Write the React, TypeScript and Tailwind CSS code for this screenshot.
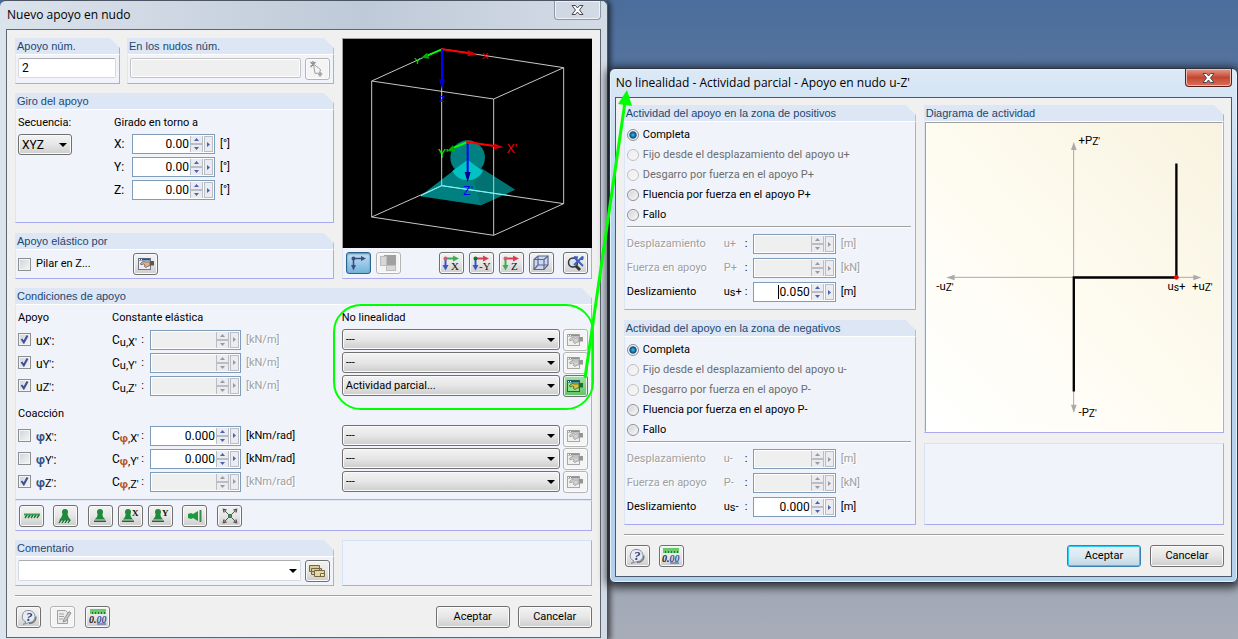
import { ReactNode, useState } from 'react';

const BUTTON =
  'flex items-center justify-center rounded-[3px] border border-[#707070] bg-linear-to-b from-[#f3f3f3] from-0% via-[#e6e6e6] via-50% to-[#cdcdcd] shadow-[inset_0_0_0_1px_#fafafa]';

function Group({ title, children, className = '' }: { title: string; children: ReactNode; className?: string }) {
  return (
    <section className={`flex min-w-0 flex-col ${className}`}>
      <h2 className="h-4 border-r border-[#a9a9ee] bg-[#dce6f5] pl-[2px] font-['Liberation_Sans',sans-serif] text-[11px] leading-4 whitespace-nowrap text-[#1c4670] [clip-path:polygon(0_0,calc(100%_-_10px)_0,100%_10px,100%_100%,0_100%)]">
        {title}
      </h2>
      <div className="flex-1 border border-t-white border-r-[#a9a9ee] border-b-[#a9a9ee] border-l-[#dce6f5] bg-[#f0f4fa]">
        {children}
      </div>
    </section>
  );
}

function EmptyPanel({ className = '' }: { className?: string }) {
  return (
    <div className={`border border-[#d5e3f7] border-r-[#a9a9ee] border-b-[#a9a9ee] bg-[#f0f4fa] ${className}`} />
  );
}

function Divider() {
  return <div className="h-[2px] shrink-0 border-t border-[#a0a0a0] bg-white" />;
}

type ToolState = 'normal' | 'disabled' | 'pressed' | 'green';

function ToolButton({
  label,
  state = 'normal',
  className = '',
  children,
}: {
  label: string;
  state?: ToolState;
  className?: string;
  children: ReactNode;
}) {
  const styles = {
    normal: BUTTON,
    disabled:
      'flex items-center justify-center rounded-[3px] border border-[#b4b4b4] bg-[#f4f4f4] shadow-[inset_0_0_0_1px_#fcfcfc] grayscale [&>svg]:opacity-60',
    pressed:
      'flex items-center justify-center rounded-[3px] border border-[#2c628b] bg-linear-to-b from-[#c4e0f1] to-[#72b3db] shadow-[inset_0_1px_2px_#4d87ad]',
    green:
      'flex items-center justify-center rounded-[3px] border border-[#707070] bg-linear-to-b from-[#a5e0a5] to-[#5fc267] shadow-[inset_0_0_0_1px_#e4f5e4]',
  };
  return (
    <button
      type="button"
      aria-label={label}
      disabled={state === 'disabled'}
      className={`h-[22px] w-[25px] shrink-0 ${styles[state]} ${className}`}
    >
      {children}
    </button>
  );
}

function TextButton({ children, primary = false }: { children: ReactNode; primary?: boolean }) {
  return (
    <button
      type="button"
      className={
        primary
          ? 'h-[22px] w-[74px] rounded-[3px] border border-[#3c7fb1] bg-linear-to-b from-[#e8f1f6] via-[#dbe9f1] via-50% to-[#bfd6e3] shadow-[inset_0_0_0_1px_#2fcdf6]'
          : `h-[22px] w-[74px] ${BUTTON}`
      }
    >
      {children}
    </button>
  );
}

function Spinner({
  label,
  value = '',
  disabled = false,
  wide = false,
  caret = false,
}: {
  label: string;
  value?: string;
  disabled?: boolean;
  wide?: boolean;
  caret?: boolean;
}) {
  const [text, setText] = useState(value);
  const arrow = disabled ? '#9a9a9a' : '#4a62b4';
  const key = 'flex items-center justify-center border border-[#b9bdc6] bg-[#ececf0]';
  return (
    <div
      className={`flex h-5 shrink-0 items-center border border-[#7f9db9] p-px ${wide ? 'w-[91px]' : 'w-[83px]'} ${
        disabled ? 'bg-[#efefef] ring-1 ring-white ring-inset' : 'bg-white'
      }`}
    >
      <div className="flex min-w-0 flex-1 items-center justify-end">
        {caret && <span className="h-[14px] w-px bg-black" />}
        <input
          aria-label={label}
          value={text}
          disabled={disabled}
          onChange={(e) => setText(e.target.value)}
          className={`min-w-0 bg-transparent pr-px text-right text-[12px] outline-none ${caret ? 'w-8' : 'w-full'}`}
        />
      </div>
      <div className="flex h-4 w-[13px] flex-col">
        <button type="button" aria-label="+" disabled={disabled} className={`h-2 border-t-0 ${key}`}>
          <svg viewBox="0 0 5 3" className="h-[3px] w-[5px]">
            <path d="M0 3L2.500 0L5 3z" fill={arrow} />
          </svg>
        </button>
        <button type="button" aria-label="-" disabled={disabled} className={`h-2 border-b-0 ${key}`}>
          <svg viewBox="0 0 5 3" className="h-[3px] w-[5px]">
            <path d="M0 0L2.500 3L5 0z" fill={arrow} />
          </svg>
        </button>
      </div>
      <button type="button" aria-label="Más" disabled={disabled} className={`ml-px h-4 w-[9px] ${key}`}>
        <svg viewBox="0 0 3 5" className="h-[5px] w-[3px]">
          <path d="M0 0L3 2.500L0 5z" fill={arrow} />
        </svg>
      </button>
    </div>
  );
}

function Unit({ children, muted = false }: { children: ReactNode; muted?: boolean }) {
  return <span className={`ml-[5px] ${muted ? 'text-[#a0a0a0] [text-shadow:1px_1px_white]' : ''}`}>{children}</span>;
}

function DropDown({ label, options, className = '' }: { label: string; options: string[]; className?: string }) {
  return (
    <div className={`relative ${className}`}>
      <select
        aria-label={label}
        className={`block h-[21px] w-full appearance-none pr-4 pl-[3px] outline-none ${BUTTON}`}
      >
        {options.map((option) => (
          <option key={option}>{option}</option>
        ))}
      </select>
      <svg viewBox="0 0 8 4" className="pointer-events-none absolute top-[9px] right-[5px] h-1 w-2">
        <path d="M0 0H8L4 4z" />
      </svg>
    </div>
  );
}

function CheckBox({ checked = false, children }: { checked?: boolean; children: ReactNode }) {
  return (
    <label className="flex items-center gap-[5px]">
      <span className="grid size-[13px] shrink-0">
        <input
          type="checkbox"
          defaultChecked={checked}
          className="peer col-start-1 row-start-1 size-[13px] appearance-none border border-[#8e8f8f] bg-linear-to-br from-[#cfd3da] to-[#f6f6f6] shadow-[inset_0_0_0_1px_#f4f4f4]"
        />
        <svg
          viewBox="0 0 13 13"
          className="pointer-events-none invisible col-start-1 row-start-1 peer-checked:visible"
          fill="none"
          stroke="#3a4f97"
          strokeWidth="2"
        >
          <path d="M3.500 6L5.800 9.300L9.500 2.500" />
        </svg>
      </span>
      {children}
    </label>
  );
}

/* Icons */

function WindowHandIcon({ tone = 'normal' }: { tone?: 'normal' | 'green' }) {
  const green = tone === 'green';
  return (
    <svg viewBox="0 0 18 16" className="h-4 w-[18px]">
      <rect x="1.500" y="2.500" width="12" height="11" fill={green ? '#8fe08f' : '#eceef2'} stroke={green ? '#1c6f2c' : '#6d7789'} />
      <path d="M2 3.500H13" stroke={green ? '#1d4f9a' : '#34528a'} strokeWidth="2" />
      <path d="M2 3.500H3M4 3.500H5" stroke="#fff" />
      <path
        d="M3.500 7.500L6 5.500L9 6L13 5.800V9.500L10.500 10.500L9 11.500L7.500 10.500L8 9L6.500 8L4 8.800z"
        fill={green ? '#d8c040' : '#d9b394'}
        stroke={green ? '#3d5a1c' : '#6e5646'}
        strokeWidth=".8"
      />
      <path d="M13 5H17V9.500L13 9.500z" fill={green ? '#187037' : '#5d574e'} />
    </svg>
  );
}

function PickIcon() {
  return (
    <svg viewBox="0 0 16 16" className="size-4">
      <path d="M1.500 1L6.500 6M6.500 1L1.500 6M4 0V5" stroke="#444" strokeWidth="1.200" />
      <path d="M4.500 3L11.500 8.500L11 10.500L13 13L11 15.500L8.500 12L6 12.500z" fill="#f4f4f4" stroke="#666" />
      <path d="M10.500 10.500L13 13L11 15.500L9 12.500z" fill="#777" />
    </svg>
  );
}

function AxisIcon({ name, h, v }: { name: string; h: string; v: string }) {
  return (
    <svg viewBox="0 0 19 16" className="h-4 w-[19px]">
      <path d="M3 3.500H12" stroke={h} strokeWidth="2" />
      <path d="M11 0.500L17 3.500L11 6.500z" fill={h} />
      <path d="M3.500 3V11" stroke={v} strokeWidth="2" />
      <path d="M.5 10H6.500L3.500 15.500z" fill={v} />
      <circle cx="3.500" cy="3.500" r="2" fill={name === '-Y' ? '#12702c' : '#d35d68'} />
      <text x={name === '-Y' ? 7 : 9} y="14.500" fontSize="11" fontFamily="Liberation Serif, serif" fill="#111">
        {name}
      </text>
    </svg>
  );
}

function AxesIcon() {
  return (
    <svg viewBox="0 0 18 16" className="h-4 w-[18px]" fill="#3d4d84">
      <path d="M4 3.500H13M4.500 3V11" stroke="#3d4d84" strokeWidth="1.500" />
      <path d="M12 1L17 3.500L12 6zM2 10H7L4.500 15.500z" />
      <circle cx="4.500" cy="3.500" r="2" />
    </svg>
  );
}

function SquaresIcon() {
  return (
    <svg viewBox="0 0 18 16" className="h-4 w-[18px]">
      <rect x="5" y="0" width="12" height="11" fill="#6a6a6a" />
      <rect x="1.500" y="1.500" width="6" height="9" fill="#c4c4c4" stroke="#999" />
      <rect x="7.500" y="10.500" width="9" height="5" fill="#c4c4c4" stroke="#999" />
    </svg>
  );
}

function CubeIcon() {
  return (
    <svg viewBox="0 0 18 16" className="h-4 w-[18px]" fill="#cdd7ef" stroke="#5d678b" strokeWidth="1.200">
      <path d="M2 4.500L6 1H16V10L12 14.500H2z" />
      <path d="M2 4.500H12V14.500M12 4.500L16 1M6 1V10H16M6 10L2 14.500" fill="none" />
    </svg>
  );
}

function ZoomAllIcon() {
  return (
    <svg viewBox="0 0 19 17" className="h-[17px] w-[19px]" fill="none">
      <circle cx="7" cy="7.500" r="4.500" fill="#d7e1f2" stroke="#333" strokeWidth="1.500" />
      <path d="M10 11L14 15" stroke="#333" strokeWidth="3" />
      <path d="M8 2L17 11M17 1.500L8 10M8 2L12 2.500M17 1.500L16 5" stroke="#3f62bb" strokeWidth="2" />
    </svg>
  );
}

function HatchIcon() {
  return (
    <svg viewBox="0 0 18 16" className="h-4 w-[18px]" stroke="#1b7a35">
      <path d="M1 6.500H17" strokeWidth="2" stroke="#3aa04c" />
      <path d="M2 10L4 7M5 10L7 7M8 10L10 7M11 10L13 7M14 10L16 7" strokeWidth="1.500" />
    </svg>
  );
}

function SupportIcon({ base, mark = '' }: { base: 'line' | 'hatch'; mark?: string }) {
  return (
    <svg viewBox="0 0 19 16" className="h-4 w-[19px]" fill="#1d8a3d">
      <circle cx={mark ? 7 : 9} cy="4" r="3" />
      {mark ? (
        <path d="M5 5H9L10 9L12 11.500H2L4 9z" />
      ) : base === 'line' ? (
        <path d="M7 5H11L12 9L14.500 11.500H3.500L6 9z" />
      ) : (
        <path d="M7 5H11L12.500 9L15 12.500H3L5.500 9z" />
      )}
      {base === 'line' ? (
        <path d={mark ? 'M1 12.500H13V14H1z' : 'M3 12.500H15V14H3z'} fill="#2e5e3c" />
      ) : (
        <path d="M3 15L5 12M6 15L8 12M9 15L11 12M12 15L14 12" stroke="#17652c" strokeWidth="1.300" />
      )}
      {mark && (
        <text x="11" y="7.500" fontSize="9" fontWeight="bold" fontFamily="Liberation Serif, serif" fill="#111">
          {mark}
        </text>
      )}
    </svg>
  );
}

function SideSupportIcon() {
  return (
    <svg viewBox="0 0 18 16" className="h-4 w-[18px]" fill="#1d9a3d">
      <path d="M2 6L5 5L7 6L12 3V13L7 10L5 11L2 10z" />
      <path d="M13.500 2H15.500V14H13.500z" fill="#3a8a4c" />
    </svg>
  );
}

function ExpandIcon() {
  return (
    <svg viewBox="0 0 16 16" className="size-4" stroke="#555" fill="none">
      <path d="M3 3L13 13M13 3L3 13" />
      <path d="M2 4.500L1.500 1.500L4.500 2M11.500 2L14.500 1.500L14 4.500M14 11.500L14.500 14.500L11.500 14M4.500 14L1.500 14.500L2 11.500" strokeWidth="1.500" />
      <rect x="6.500" y="6.500" width="3" height="3" fill="#2d9a46" stroke="#3d7a4a" />
    </svg>
  );
}

function NotesIcon() {
  return (
    <svg viewBox="0 0 18 16" className="h-4 w-[18px]" fill="#d9cb98" stroke="#75683f">
      <path d="M1.500 2.500H11.500V8.500H1.500zM3.500 5.500H13.500V11.500H3.500z" />
      <path d="M6.500 7.500H16.500V13.500H6.500z" fill="#e4d8aa" />
      <path d="M12.500 13V10.500H16" fill="#fff" />
    </svg>
  );
}

function HelpIcon() {
  return (
    <svg viewBox="0 0 18 17" className="h-[17px] w-[18px]">
      <path d="M9 1.500A6 6 0 0 1 9 13.500L3 15.500L6 13A6 6 0 0 1 9 1.500z" fill="#e7ebf5" stroke="#8b8f9a" />
      <path d="M9 14.500C13 14.500 16 12 16 7.500" fill="none" stroke="#777" strokeWidth="1.500" />
      <text x="6" y="12" fontSize="13" fontWeight="bold" fontStyle="italic" fontFamily="Liberation Serif, serif" fill="#2d4278">
        ?
      </text>
    </svg>
  );
}

function EditIcon() {
  return (
    <svg viewBox="0 0 18 16" className="h-4 w-[18px]" stroke="#6a6a6a" fill="#e6e6e6">
      <path d="M3.500 1.500H11.500L13.500 3.500V14.500H3.500z" />
      <path d="M5 5H10M5 7.500H10M5 10H9" />
      <path d="M9 13L10 10L15 2.500L17 4L12 12z" fill="#aaa" stroke="#555" />
    </svg>
  );
}

function DecimalsIcon() {
  return (
    <svg viewBox="0 0 18 16" className="h-4 w-[18px]">
      <path d="M1 0H17V5H1z" fill="#69c96c" />
      <path d="M3.500 3V5M6.500 3V5M9.500 3V5M12.500 3V5M15.500 3V5" stroke="#276e31" />
      <text x="0" y="13.500" fontSize="10" fontWeight="bold" fontStyle="italic" fontFamily="Liberation Serif, serif" fill="#222">
        0.<tspan fill="#35509a">00</tspan>
      </text>
      <path d="M8 15H17" stroke="#35509a" />
    </svg>
  );
}

function CloseIcon() {
  return (
    <svg viewBox="0 0 13 10" className="h-[10px] w-[13px]">
      <path d="M1 .5H4.500L6.500 3L8.500 .5H12L8.500 5L12 9.500H8.500L6.500 7L4.500 9.500H1L4.500 5z" fill="#fff" stroke="#45484f" strokeLinejoin="round" />
    </svg>
  );
}

function ModelView() {
  return (
    <svg viewBox="24 116 747 627" className="block h-[209px] w-full bg-black" fontFamily="Liberation Sans, sans-serif">
      <circle cx="398" cy="472" r="52" fill="#008080" />
      <path d="M255 588L398 478L540 568L437 615z" fill="#008080" />
      <path d="M398 478L540 568L437 615z" fill="#007272" />
      <path d="M398 478L352 512A52 52 0 0 0 444 512z" fill="#00c4c4" />
      <g fill="none" stroke="#c8c8c8" strokeWidth="3">
        <path d="M110 242L321 146L686 202L476 296zM110 650L476 705L686 610" />
        <path d="M110 242V650M476 296V705M686 202V610M320 146V556M110 650L320 556L686 610" />
      </g>
      <path d="M258 586L320 556L526 586" fill="none" stroke="#6ff" strokeWidth="3" />
      <g strokeWidth="6">
        <path d="M321 147L402 158" stroke="#f00" />
        <path d="M398 150L428 162L398 168z" fill="#c00" />
        <path d="M321 147L278 165" stroke="#0f0" />
        <path d="M276 157L258 172L284 175z" fill="#0a0" />
        <path d="M321 147V240" stroke="#00f" />
        <path d="M312 237H330L321 267z" fill="#00c" />
        <path d="M398 425L478 437" stroke="#f00" />
        <path d="M476 429L506 441L476 447z" fill="#c00" />
        <path d="M398 425L356 442" stroke="#0f0" />
        <path d="M354 435L336 452L362 454z" fill="#0a0" />
        <path d="M398 425V518" stroke="#00f" />
        <path d="M389 515H407L398 546z" fill="#008" />
      </g>
      <rect x="394" y="421" width="9" height="9" fill="#f00" />
      <g fontSize="29">
        <text x="441" y="177" fill="#f00">X</text>
        <text x="238" y="191" fill="#0f0">Y</text>
        <text x="313" y="304" fill="#00f">Z</text>
      </g>
      <g fontSize="36">
        <text x="515" y="458" fill="#f00">X'</text>
        <text x="309" y="473" fill="#0f0">Y'</text>
        <text x="385" y="584" fill="#00f">Z'</text>
      </g>
    </svg>
  );
}

function ActivityDiagram() {
  return (
    <svg viewBox="31 186 891 924" className="block h-[308px] w-full" fontFamily="Roboto, sans-serif" fontSize="34">
      <path d="M475 1040V262M112 649H840" stroke="#aaa" strokeWidth="3" />
      <path d="M467 266H484L475.500 242zM467 1032H484L475.500 1057zM117 641V658L92 649.500zM835 641V658L859 649.500z" fill="#aaa" />
      <path d="M475.500 992V649.500H784V307" fill="none" stroke="#000" strokeWidth="7" />
      <circle cx="784" cy="649" r="7" fill="#f00" />
      <text x="490" y="249">+P<tspan fontSize="31" dy="3">Z'</tspan></text>
      <text x="490" y="1067">-P<tspan fontSize="31" dy="3">Z'</tspan></text>
      <text x="62" y="686">-u<tspan fontSize="31" dy="3">Z'</tspan></text>
      <text x="757" y="686">u<tspan fontSize="31" dy="3">s</tspan><tspan dy="-3">+</tspan></text>
      <text x="831" y="686">+u<tspan fontSize="31" dy="3">Z'</tspan></text>
    </svg>
  );
}

const ROTATIONS = ['X', 'Y', 'Z'];

const SUPPORTS = [
  { symbol: 'u', axis: "X'", unit: '[kN/m]', checked: true, options: ['---', 'Actividad parcial...'] },
  { symbol: 'u', axis: "Y'", unit: '[kN/m]', checked: true, options: ['---', 'Actividad parcial...'] },
  { symbol: 'u', axis: "Z'", unit: '[kN/m]', checked: true, options: ['Actividad parcial...', '---'] },
];

const RESTRAINTS = [
  { symbol: 'φ', axis: "X'", unit: '[kNm/rad]', checked: false, options: ['---'] },
  { symbol: 'φ', axis: "Y'", unit: '[kNm/rad]', checked: false, options: ['---'] },
  { symbol: 'φ', axis: "Z'", unit: '[kNm/rad]', checked: true, options: ['---'] },
];

function ConditionRow({ symbol, axis, unit, checked, options }: (typeof SUPPORTS)[number]) {
  const partial = options[0] !== '---';
  const greek = symbol === 'φ';
  return (
    <div className="flex h-[23px] items-center">
      <div className="w-[94px] shrink-0">
        <CheckBox checked={checked}>
          <span className="pt-[3px] text-[12px]">
            <span className={greek ? 'font-bold text-[#33558c]' : ''}>{symbol}</span>
            <span className="text-[11px]">{axis}</span>:
          </span>
        </CheckBox>
      </div>
      <div className="flex w-[38px] shrink-0 justify-between pr-[6px]">
        <span className="text-[12px] whitespace-nowrap">
          C
          <sub className="bottom-[-2px] text-[11px]">
            <span className={greek ? 'font-bold text-[#b8581c]' : ''}>{symbol}</span>,{axis}
          </sub>
        </span>
        <span>:</span>
      </div>
      <Spinner label={`C ${symbol},${axis}`} value={checked ? '' : '0.000'} disabled={checked} wide />
      <Unit muted={checked}>{unit}</Unit>
      <div className="ml-auto flex w-[246px] shrink-0 items-center gap-[3px]">
        <DropDown label={`No linealidad ${symbol}${axis}`} options={options} className="w-[218px]" />
        <ToolButton label="Editar" state={partial ? 'green' : 'disabled'}>
          <WindowHandIcon tone={partial ? 'green' : 'normal'} />
        </ToolButton>
      </div>
    </div>
  );
}

function SupportWindow() {
  return (
    <main className="flex min-w-0 flex-[607] flex-col rounded-t-[6px] border-t border-r border-[#4c5563] bg-linear-to-r from-[#dbe3ec] via-[#bfcad8] via-60% to-[#d3dbe6] px-[6px] pb-[2px] shadow-[3px_0_5px_#0008]">
      <div className="flex h-7 items-start justify-between">
        <h1 className="pl-px font-['Open_Sans',sans-serif] text-[12px] leading-7">Nuevo apoyo en nudo</h1>
        <button
          type="button"
          aria-label="Cerrar"
          className="flex h-[19px] w-[47px] items-center justify-center rounded-b-[4px] border border-t-0 border-[#8c98a8] shadow-[inset_0_0_0_1px_#eef2f6]"
        >
          <CloseIcon />
        </button>
      </div>

      <div className="flex flex-col gap-[9px] border border-[#5f6670] bg-[#f0f0f0] p-2 pb-[9px]">
        <div className="flex gap-2">
          <div className="flex min-w-0 flex-1 flex-col gap-[9px]">
            <div className="flex gap-[7px]">
              <Group title="Apoyo núm." className="h-[46px] w-[105px]">
                <input
                  aria-label="Apoyo núm."
                  defaultValue="2"
                  className="mx-[2px] mt-[3px] block h-5 w-[98px] rounded-[2px] border border-[#d6dae0] border-t-[#abadb3] bg-white px-[3px] text-[12px] outline-none"
                />
              </Group>
              <Group title="En los nudos núm." className="h-[46px] flex-1">
                <div className="flex gap-1 pt-[3px] pr-[3px] pl-[2px]">
                  <input
                    aria-label="En los nudos núm."
                    disabled
                    className="h-5 min-w-0 flex-1 rounded-[2px] border border-[#c3c3c3] bg-[#efefef] shadow-[inset_0_0_0_1px_white]"
                  />
                  <ToolButton label="Seleccionar nudos" state="disabled">
                    <PickIcon />
                  </ToolButton>
                </div>
              </Group>
            </div>

            <Group title="Giro del apoyo" className="mb-px h-[130px]">
              <div className="flex pt-1 pl-[2px]">
                <div className="w-24">
                  <p className="mb-[2px] leading-[18px]">Secuencia:</p>
                  <DropDown label="Secuencia" options={['XYZ', 'XZY', 'YXZ']} className="w-[54px] text-[12px]" />
                </div>
                <div>
                  <p className="mb-[2px] leading-[18px]">Girado en torno a</p>
                  <div className="flex flex-col gap-[3px]">
                    {ROTATIONS.map((axis) => (
                      <div key={axis} className="flex items-center">
                        <span className="w-[18px] text-[12px]">{axis}:</span>
                        <Spinner label={axis} value="0.00" />
                        <Unit>[°]</Unit>
                      </div>
                    ))}
                  </div>
                </div>
              </div>
            </Group>

            <Group title="Apoyo elástico por" className="h-[46px]">
              <div className="flex items-center px-[2px] pt-[3px]">
                <div className="w-[115px]">
                  <CheckBox>Pilar en Z...</CheckBox>
                </div>
                <ToolButton label="Editar pilar">
                  <WindowHandIcon />
                </ToolButton>
              </div>
            </Group>
          </div>

          <div className="flex w-[250px] shrink-0 flex-col">
            <div className="border-t border-l border-[#a0a0a0]">
              <ModelView />
            </div>
            <div className="flex flex-1 items-center border-r border-b border-l border-[#a9a9ee] border-l-[#dce6f5] bg-[#f0f4fa] pr-[3px] pl-[3px]">
              <ToolButton label="Ejes" state="pressed">
                <AxesIcon />
              </ToolButton>
              <ToolButton label="Relleno" state="disabled" className="mr-auto ml-[5px]">
                <SquaresIcon />
              </ToolButton>
              <div className="flex gap-[5px]">
                <ToolButton label="Vista X">
                  <AxisIcon name="X" h="#3fae51" v="#3d55c8" />
                </ToolButton>
                <ToolButton label="Vista -Y">
                  <AxisIcon name="-Y" h="#df3c50" v="#3d55c8" />
                </ToolButton>
                <ToolButton label="Vista Z">
                  <AxisIcon name="Z" h="#df3c50" v="#3fae51" />
                </ToolButton>
                <ToolButton label="Isométrica">
                  <CubeIcon />
                </ToolButton>
              </div>
              <ToolButton label="Ver todo" className="ml-[9px]">
                <ZoomAllIcon />
              </ToolButton>
            </div>
          </div>
        </div>

        <div>
          <Group title="Condiciones de apoyo" className="h-[212px]">
            <div className="py-[3px] pr-[3px] pl-[2px]">
              <div className="flex h-5 items-center">
                <span className="w-[94px]">Apoyo</span>
                <span>Constante elástica</span>
                <span className="ml-auto w-[246px]">No linealidad</span>
              </div>
              {SUPPORTS.map((row) => (
                <ConditionRow key={row.axis} {...row} />
              ))}
              <p className="mt-[7px] leading-5">Coacción</p>
              {RESTRAINTS.map((row) => (
                <ConditionRow key={row.axis} {...row} />
              ))}
            </div>
          </Group>
          <div className="flex h-[31px] items-center border border-[#a9a9ee] border-t-[#dce6f5] border-l-[#dce6f5] bg-[#f0f4fa] pl-[3px]">
            <ToolButton label="Empotrado">
              <HatchIcon />
            </ToolButton>
            <ToolButton label="Articulado fijo" className="ml-[9px]">
              <SupportIcon base="hatch" />
            </ToolButton>
            <div className="ml-[10px] flex gap-[5px]">
              <ToolButton label="Deslizante">
                <SupportIcon base="line" />
              </ToolButton>
              <ToolButton label="Deslizante en X">
                <SupportIcon base="line" mark="X" />
              </ToolButton>
              <ToolButton label="Deslizante en Y">
                <SupportIcon base="line" mark="Y" />
              </ToolButton>
            </div>
            <ToolButton label="Lateral" className="ml-[9px]">
              <SideSupportIcon />
            </ToolButton>
            <ToolButton label="Libre" className="ml-[10px]">
              <ExpandIcon />
            </ToolButton>
          </div>
        </div>

        <div className="flex gap-2">
          <Group title="Comentario" className="h-[46px] flex-1">
            <div className="flex gap-1 pt-[3px] pr-[3px] pl-[2px]">
              <div className="relative min-w-0 flex-1">
                <select
                  aria-label="Comentario"
                  className="block h-[21px] w-full appearance-none rounded-[2px] border border-[#d6dae0] border-t-[#abadb3] bg-white outline-none"
                />
                <svg viewBox="0 0 8 4" className="pointer-events-none absolute top-[9px] right-1 h-1 w-2">
                  <path d="M0 0H8L4 4z" />
                </svg>
              </div>
              <ToolButton label="Comentarios guardados">
                <NotesIcon />
              </ToolButton>
            </div>
          </Group>
          <EmptyPanel className="w-[250px] shrink-0" />
        </div>

        <Divider />

        <div className="flex items-center pl-px">
          <ToolButton label="Ayuda">
            <HelpIcon />
          </ToolButton>
          <ToolButton label="Editar comentario" state="disabled" className="ml-[9px]">
            <EditIcon />
          </ToolButton>
          <ToolButton label="Unidades y decimales" className="ml-[10px]">
            <DecimalsIcon />
          </ToolButton>
          <div className="ml-auto flex gap-2">
            <TextButton>Aceptar</TextButton>
            <TextButton>Cancelar</TextButton>
          </div>
        </div>
      </div>
    </main>
  );
}

function ZoneGroup({ title, sign, slip, focused = false }: { title: string; sign: string; slip: string; focused?: boolean }) {
  const modes = [
    { text: 'Completa', disabled: false },
    { text: `Fijo desde el desplazamiento del apoyo u${sign}`, disabled: true },
    { text: `Desgarro por fuerza en el apoyo P${sign}`, disabled: true },
    { text: `Fluencia por fuerza en el apoyo P${sign}`, disabled: false },
    { text: 'Fallo', disabled: false },
  ];
  const rows = [
    { name: 'Desplazamiento', symbol: <>u{sign}</>, unit: '[m]', value: '', disabled: true },
    { name: 'Fuerza en apoyo', symbol: <>P{sign}</>, unit: '[kN]', value: '', disabled: true },
    {
      name: 'Deslizamiento',
      symbol: (
        <>
          u<sub className="bottom-[-1px] text-[11px]">s</sub>
          {sign}
        </>
      ),
      unit: '[m]',
      value: slip,
      disabled: false,
    },
  ];

  return (
    <Group title={title} className="h-[205px]">
      <div className="px-[2px] pt-[3px] pr-1">
        {modes.map((mode, i) => (
          <label key={mode.text} className={`flex h-5 items-center gap-1 ${mode.disabled ? 'text-[#6d6d6d]' : ''}`}>
            <input
              type="radio"
              name={title}
              defaultChecked={i === 0}
              disabled={mode.disabled}
              className="size-3 shrink-0 appearance-none rounded-full border border-[#8e8f8f] bg-linear-to-br from-[#cfd3d8] to-[#f8f8f8] shadow-[inset_0_0_0_1px_#f4f4f4] checked:bg-radial checked:from-[#29a8e0] checked:from-10% checked:via-[#0e4a78] checked:via-45% checked:to-[#dfe6ec] checked:to-60% disabled:border-[#c0c0c0] disabled:from-[#ececec]"
            />
            {mode.text}
          </label>
        ))}
        <div className="mt-px mb-1">
          <Divider />
        </div>
        {rows.map((row) => (
          <div key={row.name} className="flex h-6 items-center">
            <span className={`w-[97px] ${row.disabled ? 'text-[#a0a0a0] [text-shadow:1px_1px_white]' : ''}`}>{row.name}</span>
            <span className={`w-[21px] ${row.disabled ? 'text-[#a0a0a0] [text-shadow:1px_1px_white]' : ''}`}>{row.symbol}</span>
            <span className="w-2">:</span>
            <Spinner label={row.name} value={row.value} disabled={row.disabled} caret={focused && !row.disabled} />
            <Unit muted={row.disabled}>{row.unit}</Unit>
          </div>
        ))}
      </div>
    </Group>
  );
}

function NonlinearityWindow() {
  return (
    <aside className="relative mt-[68px] ml-px flex min-w-0 flex-[630] flex-col rounded-[6px] border border-[#2b3440] bg-linear-to-b from-[#dce9f6] from-0% via-[#b5d3ee] via-30% to-[#b3d0ec] px-[5px] pb-[5px] shadow-[0_2px_8px_3px_#000a,inset_0_0_0_1px_#e4f0fa]">
      <div className="flex h-7 items-start justify-between">
        <h1 className="pl-px font-['Open_Sans',sans-serif] text-[12px] leading-7 whitespace-nowrap">
          No linealidad - Actividad parcial - Apoyo en nudo u-Z'
        </h1>
        <button
          type="button"
          aria-label="Cerrar"
          className="flex h-[18px] w-[47px] items-center justify-center rounded-b-[4px] border border-t-0 border-[#5a1c18] bg-linear-to-b from-[#e09a8c] via-[#c5462f] via-50% to-[#d9705a] shadow-[inset_0_0_0_1px_#eebcb0]"
        >
          <CloseIcon />
        </button>
      </div>

      <div className="flex flex-col gap-[9px] border border-[#4d5a6b] bg-[#f0f0f0] pt-[7px] pr-[7px] pb-[9px] pl-2">
        <div className="flex gap-2">
          <div className="flex w-[292px] shrink-0 flex-col gap-[10px]">
            <ZoneGroup title="Actividad del apoyo en la zona de positivos" sign="+" slip="0.050" focused />
            <ZoneGroup title="Actividad del apoyo en la zona de negativos" sign="-" slip="0.000" />
          </div>
          <div className="flex min-w-0 flex-1 flex-col gap-[10px]">
            <Group title="Diagrama de actividad">
              <div className="border border-[#a0a0a0] border-r-white border-b-white bg-linear-to-tr from-white via-[#fefbf0] to-[#f8f3e0]">
                <ActivityDiagram />
              </div>
            </Group>
            <EmptyPanel className="flex-1" />
          </div>
        </div>

        <Divider />

        <div className="flex items-center pl-px">
          <ToolButton label="Ayuda">
            <HelpIcon />
          </ToolButton>
          <ToolButton label="Unidades y decimales" className="ml-[9px]">
            <DecimalsIcon />
          </ToolButton>
          <div className="ml-auto flex gap-[9px]">
            <TextButton primary>Aceptar</TextButton>
            <TextButton>Cancelar</TextButton>
          </div>
        </div>
      </div>
    </aside>
  );
}

export default function App() {
  return (
    <div className="relative flex min-h-screen items-start overflow-hidden bg-linear-to-b from-[#4b6d9b] to-[#a8adb9] font-['Roboto',sans-serif] text-[11px] leading-4 text-black">
      <SupportWindow />
      <NonlinearityWindow />

      {/* Callout from the nonlinearity list to the dialog it opens */}
      <svg
        width="640"
        height="420"
        className="pointer-events-none absolute top-0 left-0"
        fill="none"
        stroke="#00ff00"
      >
        <rect x="334" y="305" width="259" height="104" rx="27" strokeWidth="2" />
        <path d="M585 378L625 102" strokeWidth="3" />
        <path d="M627 90L618 104L632 106z" fill="#00ff00" stroke="none" />
      </svg>
    </div>
  );
}
